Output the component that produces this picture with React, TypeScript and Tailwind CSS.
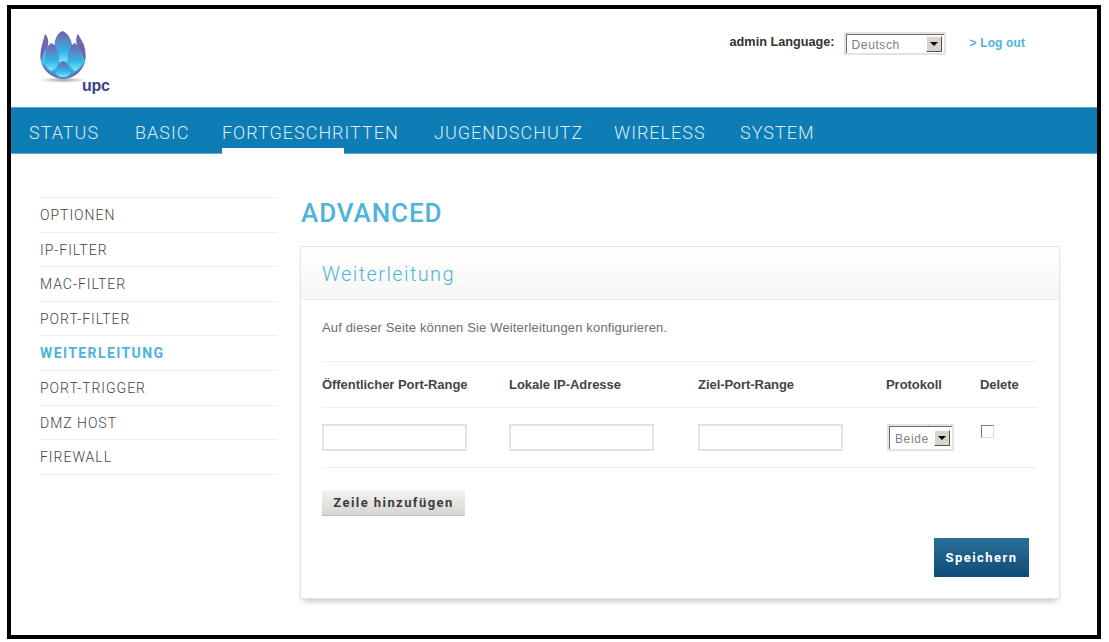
import React from "react";

const topNav = ["STATUS", "BASIC", "FORTGESCHRITTEN", "JUGENDSCHUTZ", "WIRELESS", "SYSTEM"];
const sideNav = ["OPTIONEN", "IP-FILTER", "MAC-FILTER", "PORT-FILTER", "WEITERLEITUNG", "PORT-TRIGGER", "DMZ HOST", "FIREWALL"];
const columns = ["Öffentlicher Port-Range", "Lokale IP-Adresse", "Ziel-Port-Range", "Protokoll", "Delete"];

const Logo: React.FC = () => (
  <svg width="85" height="75" viewBox="0 0 85 75" className="block">
    <defs>
      <linearGradient id="petal" x1="0" y1="0" x2="0" y2="1">
        <stop offset="0" stopColor="#6b5fa8" />
        <stop offset="0.3" stopColor="#5a86c6" />
        <stop offset="0.65" stopColor="#30b6e6" />
        <stop offset="1" stopColor="#86e6f8" />
      </linearGradient>
      <linearGradient id="bowl" x1="0" y1="0" x2="0" y2="1">
        <stop offset="0" stopColor="#6fd6f3" />
        <stop offset="0.7" stopColor="#2fb4e6" />
        <stop offset="1" stopColor="#5a7fc4" />
      </linearGradient>
      <radialGradient id="shade">
        <stop offset="0" stopColor="#80858e" stopOpacity="0.75" />
        <stop offset="1" stopColor="#80858e" stopOpacity="0" />
      </radialGradient>
    </defs>
    <ellipse cx="33" cy="55" rx="24" ry="3" fill="url(#shade)" />
    {/* bowl behind the petals */}
    <path d="M10 31 C11 44 22 54 33 54 C45 54 55 44 56 31 L50 20 H16Z" fill="url(#bowl)" />
    {/* outer narrow petals */}
    <path d="M15 9 C19 13 19 19 17 23 C14 27 12 31 12 37 C10 32 10 26 12 20 C13 16 14 12 15 9Z" fill="#6d67ad" />
    <path d="M48 9 C45 13 46 19 49 24 C52 28 54 32 54 37 C56 32 56 26 54 20 C52 16 50 12 48 9Z" fill="#6d67ad" />
    {/* center back petal */}
    <path d="M32.5 6 C38 8 42.5 15 42.5 25 C42.5 31 38.5 36 32.5 38 C27 36 24 31 24 25 C24 15 27 8 32.5 6Z" fill="url(#petal)" />
    {/* side petals */}
    <path d="M21 18 C26 20 30 28 29 35 C28 41 25 44 21 46 C17 44 14.5 39 14.5 33 C14.5 27 17 22 21 18Z" fill="url(#petal)" />
    <path d="M45 18 C40 20 37 28 38 35 C39 41 42 44 45 46 C50 44 52.5 39 52.5 33 C52.5 27 49 22 45 18Z" fill="url(#petal)" />
    {/* front petal */}
    <path d="M33 36 C38 38 40.5 43 40.5 47 C40.5 50 37 52 33 52 C29 52 26 50 26 47 C26 43 28 38 33 36Z" fill="url(#petal)" />
    {/* purple rim on the bowl */}
    <path d="M11 37 C17 47 25 50 29 52 C21 52 14 46 11 37Z" fill="#6d67ad" />
    <path d="M55 37 C49 47 41 50 37 52 C45 52 52 46 55 37Z" fill="#6d67ad" />
  </svg>
);

const ClassicSelect: React.FC<{ label: string; className: string; textClass: string }> = ({ label, className, textClass }) => (
  <div className={`flex items-center justify-between bg-white border-2 border-[#e4e2dc] ${className}`}>
    <div className="flex items-center justify-between h-full w-full border-l border-t border-[#6f6d67] pr-[2px]">
      <span className={`text-[#808080] tracking-[0.05em] ${textClass}`}>{label}</span>
      <span className="flex items-center justify-center w-[16px] h-[16px] bg-[#d8d4cc] border border-t-white border-l-white border-r-[#55534e] border-b-[#55534e]">
        <span className="w-0 h-0 border-x-[4px] border-x-transparent border-t-[4px] border-t-black" />
      </span>
    </div>
  </div>
);

export default function App() {
  return (
    <div className="bg-white pt-[5px] pl-[7px] pr-[8px] pb-[3px] font-['Liberation_Sans',sans-serif]">
      <div className="w-[1094px] h-[634px] border-4 border-black bg-white overflow-hidden">
        {/* HEADER */}
        <header className="h-[98px] flex justify-between">
          <div className="relative pl-[19px] pt-[16px]">
            <Logo />
            <span className="absolute left-[71px] top-[65px] text-[16px] font-bold leading-[24px] tracking-[-0.02em] text-[#3b3f8c]">upc</span>
          </div>
          <div className="flex items-start pt-[23px] pr-[72px]">
            <span className="mt-[3px] text-[12.7px] leading-[14px] font-bold text-[#333333]">admin Language:</span>
            <ClassicSelect label="Deutsch" className="ml-[9px] w-[102px] h-[23px]" textClass="ml-[5px] text-[12px] mt-[2px]" />
            <span className="ml-[24px] mt-[4px] text-[12px] leading-[14px] font-bold text-[#4fb3dc] tracking-[0.01em]">&gt; Log out</span>
          </div>
        </header>

        {/* TOP NAV */}
        <nav className="h-[47px] bg-[#0e7db5] border-t border-b border-[#58a9d3] grid grid-cols-[106px_87px_212px_180px_126px_auto] pl-[18px] font-['Roboto',sans-serif]">
          {topNav.map((item) => (
            <a key={item} className="relative h-[45px] leading-[49px] text-[18px] font-light tracking-[0.055em] text-[#dcebf4]">
              {item}
              {item === "FORTGESCHRITTEN" && (
                <span className="absolute left-0 bottom-[-1px] w-[122px] h-[6px] bg-white" />
              )}
            </a>
          ))}
        </nav>

        <div className="flex pt-[43px] pl-[29px]">
          {/* SIDEBAR */}
          <aside className="w-[237px] mr-[23px]">
            <ul className="border-t border-[#efefef] font-['Roboto',sans-serif]">
              {sideNav.map((item) => (
                <li
                  key={item}
                  className={`h-[34.6px] border-b border-[#efefef] leading-[34px] text-[14px] ${
                    item === "WEITERLEITUNG" ? "font-bold tracking-[0.1em] text-[#4fb3dc]" : "font-light tracking-[0.07em] text-[#444444]"
                  }`}
                >
                  {item}
                </li>
              ))}
            </ul>
          </aside>

          {/* MAIN */}
          <main className="w-[760px]">
            <h1 className="h-[49px] pl-[1px] text-[26px] leading-[32px] font-['Roboto',sans-serif] font-medium tracking-[0.035em] text-[#4fb3dc]">
              ADVANCED
            </h1>
            <section className="h-[353px] border border-[#e4e4e4] shadow-[0_5px_6px_-3px_rgba(0,0,0,0.25)]">
              <div className="h-[53px] bg-gradient-to-b from-white to-[#f6f6f4] border-b border-[#ececec] pl-[21px] leading-[54px] text-[20px] tracking-[0.07em] font-['Roboto',sans-serif] font-light text-[#4fb3dc]">
                Weiterleitung
              </div>
              <div className="pl-[21px] pr-[22px]">
                <p className="h-[62px] pt-[21px] text-[13px] tracking-[0.15px] leading-[14px] text-[#6e6e6e] border-b border-[#efefef]">
                  Auf dieser Seite können Sie Weiterleitungen konfigurieren.
                </p>
                <div className="grid grid-cols-[187px_189px_188px_94px_1fr] h-[46px] items-center border-b border-[#efefef]">
                  {columns.map((col) => (
                    <span key={col} className="text-[13px] tracking-[-0.05px] font-bold text-[#444444]">
                      {col}
                    </span>
                  ))}
                </div>
                <div className="grid grid-cols-[187px_189px_188px_94px_1fr] h-[60px] pt-[16px] border-b border-[#efefef]">
                  <input className="w-[145px] h-[27px] border-2 border-[#e2e2e2]" />
                  <input className="w-[145px] h-[27px] border-2 border-[#e2e2e2]" />
                  <input className="w-[145px] h-[27px] border-2 border-[#e2e2e2]" />
                  <ClassicSelect label="Beide" className="w-[67px] h-[27px] ml-[1px]" textClass="ml-[5px] text-[12px] mt-[1px]" />
                  <input type="checkbox" className="appearance-none w-[13px] h-[13px] ml-[1px] mt-[1px] border border-[#7a7a7a] border-r-[#dddddd] border-b-[#dddddd] bg-white" />
                </div>
                <button className="mt-[22px] block w-[143px] h-[26px] bg-gradient-to-b from-[#f4f4f2] to-[#d6d5d1] border-b border-[#bdbcb8] text-[13px] font-['Roboto',sans-serif] font-bold tracking-[0.11em] text-[#3d3d3d]">
                  Zeile hinzufügen
                </button>
                <div className="flex justify-end pr-[8px] mt-[22px]">
                  <button className="w-[95px] h-[39px] bg-gradient-to-b from-[#2a6f97] to-[#0d4c76] text-[13px] font-['Roboto',sans-serif] font-bold tracking-[0.11em] text-white">
                    Speichern
                  </button>
                </div>
              </div>
            </section>
          </main>
        </div>
      </div>
    </div>
  );
}
